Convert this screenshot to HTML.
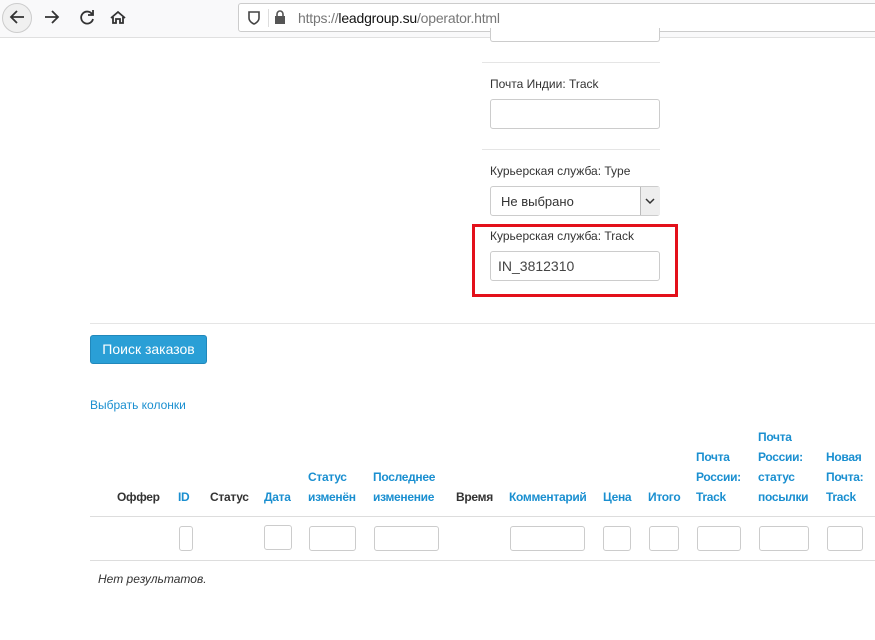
<!DOCTYPE html>
<html><head><meta charset="utf-8"><style>
body{margin:0;width:875px;height:640px;overflow:hidden;background:#fff;font-family:"Liberation Sans",Arial,sans-serif;font-size:12px;color:#333;position:relative}
.a{position:absolute}
.inp{position:absolute;border:1px solid #ccc;border-radius:3px;background:#fff;box-sizing:border-box}
.l{position:absolute;font-size:12px;color:#333}
.h{position:absolute;font-weight:bold;font-size:12px;line-height:20px;color:#333;letter-spacing:-0.3px}
.b{color:#1a8fd0}
</style></head><body>
<div class="a" style="left:0;top:0;width:875px;height:37px;background:#f9f9fa;border-bottom:1px solid #e0e0e0"></div>
<div class="a" style="left:2px;top:3px;width:30px;height:30px;border:1px solid #ccc;border-radius:50%;box-sizing:border-box;background:#f0f0f0"></div>
<svg class="a" style="left:0;top:0" width="140" height="37" fill="none" stroke="#333" stroke-width="1.8">
<path d="M24 17H11M17 11l-6 6 6 6"/><path d="M45 17h13M52 11l6 6-6 6"/>
<path d="M92 14a6 6 0 1 0 1 5M93 10v5h-5"/>
<path d="M111 18l7-6 7 6M113 17v6h3v-4h4v4h3v-6"/></svg>
<div class="a" style="left:238px;top:3px;width:640px;height:29px;border:1px solid #ccc;border-radius:3px;background:#fff;box-sizing:border-box"></div>
<svg class="a" style="left:245px;top:9px" width="40" height="18"><path d="M4 3h10v6c0 4-5 6-5 6s-5-2-5-6z" fill="none" stroke="#444" stroke-width="1.6"/><rect x="30" y="7" width="10" height="8" fill="#555"/><path d="M32 7V5a3 3 0 0 1 6 0v2" fill="none" stroke="#555" stroke-width="1.6"/></svg>
<div class="a" style="left:268px;top:9px;width:1px;height:18px;background:#ddd"></div>
<div class="a" style="left:298px;top:10px;font-size:14px;color:#777;letter-spacing:-0.2px">https://<span style="color:#111">leadgroup.su</span>/operator.html</div>
<div class="inp" style="left:490px;top:28px;width:170px;height:14px;border-top:none;border-radius:0 0 3px 3px"></div>
<div class="a" style="left:482px;top:62px;width:178px;height:1px;background:#e5e5e5"></div>
<div class="l" style="left:490px;top:77px">Почта Индии: Track</div>
<div class="inp" style="left:490px;top:99px;width:170px;height:30px"></div>
<div class="a" style="left:482px;top:149px;width:178px;height:1px;background:#e5e5e5"></div>
<div class="l" style="left:490px;top:164px">Курьерская служба: Type</div>
<div class="inp" style="left:490px;top:186px;width:170px;height:30px;font-size:13px;padding:7px 10px">Не выбрано</div>
<div class="a" style="left:640px;top:187px;width:19px;height:28px;background:#eee;border-left:1px solid #bbb"></div>
<svg class="a" style="left:644px;top:196px" width="12" height="10"><path d="M2 3l4 4 4-4" fill="none" stroke="#333" stroke-width="1.5"/></svg>
<div class="a" style="left:472px;top:224px;width:206px;height:73px;border:3px solid #e3101a;box-sizing:border-box"></div>
<div class="l" style="left:490px;top:229px">Курьерская служба: Track</div>
<div class="inp" style="left:490px;top:251px;width:170px;height:30px;font-size:14px;padding:6px 7px;color:#444">IN_3812310</div>
<div class="a" style="left:90px;top:323px;width:785px;height:1px;background:#e5e5e5"></div>
<div class="a" style="left:90px;top:335px;width:117px;height:29px;background:#2a9fd6;border:1px solid #2188bb;border-radius:3px;box-sizing:border-box;color:#fff;font-size:14px;text-align:center;line-height:27px">Поиск заказов</div>
<div class="a b" style="left:90px;top:398px">Выбрать колонки</div>
<div class="h" style="left:117px;top:487px">Оффер</div>
<div class="h b" style="left:178px;top:487px">ID</div>
<div class="h" style="left:210px;top:487px">Статус</div>
<div class="h b" style="left:264px;top:487px">Дата</div>
<div class="h b" style="left:308px;top:467px">Статус<br>изменён</div>
<div class="h b" style="left:373px;top:467px">Последнее<br>изменение</div>
<div class="h" style="left:456px;top:487px">Время</div>
<div class="h b" style="left:509px;top:487px">Комментарий</div>
<div class="h b" style="left:603px;top:487px">Цена</div>
<div class="h b" style="left:648px;top:487px">Итого</div>
<div class="h b" style="left:696px;top:447px">Почта<br>России:<br>Track</div>
<div class="h b" style="left:758px;top:427px">Почта<br>России:<br>статус<br>посылки</div>
<div class="h b" style="left:826px;top:447px">Новая<br>Почта:<br>Track</div>
<div class="a" style="left:90px;top:516px;width:785px;height:1px;background:#ddd"></div>
<div class="inp" style="left:179px;top:526px;width:14px;height:25px"></div>
<div class="inp" style="left:264px;top:525px;width:28px;height:25px"></div>
<div class="inp" style="left:309px;top:526px;width:47px;height:25px"></div>
<div class="inp" style="left:374px;top:526px;width:65px;height:25px"></div>
<div class="inp" style="left:510px;top:526px;width:75px;height:25px"></div>
<div class="inp" style="left:603px;top:526px;width:28px;height:25px"></div>
<div class="inp" style="left:649px;top:526px;width:30px;height:25px"></div>
<div class="inp" style="left:697px;top:526px;width:44px;height:25px"></div>
<div class="inp" style="left:759px;top:526px;width:50px;height:25px"></div>
<div class="inp" style="left:827px;top:526px;width:36px;height:25px"></div>
<div class="a" style="left:90px;top:560px;width:785px;height:1px;background:#ddd"></div>
<div class="a" style="left:98px;top:572px;font-style:italic;color:#333">Нет результатов.</div>
</body></html>
